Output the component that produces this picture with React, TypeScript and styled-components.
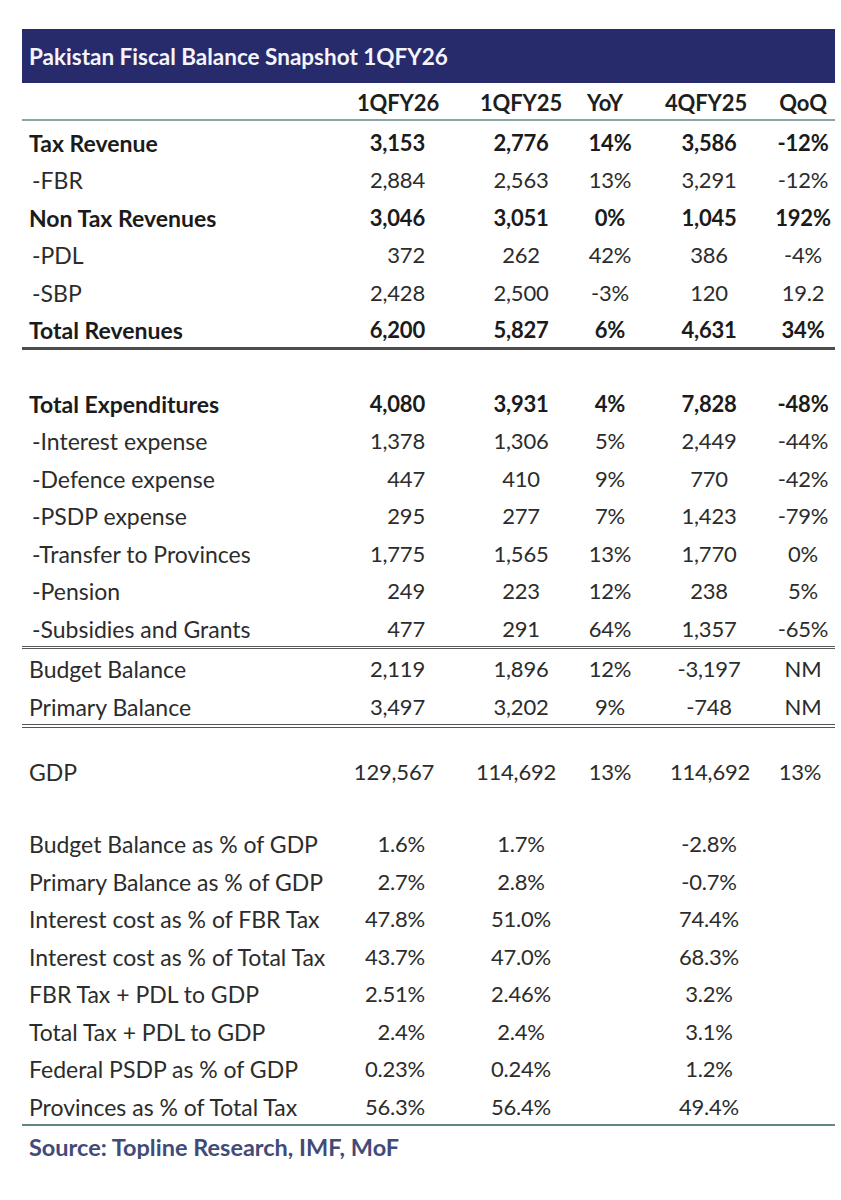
import React from "react";
import styled, { createGlobalStyle } from "styled-components";

const GlobalStyle = createGlobalStyle`
  html, body { margin: 0; padding: 0; background: #ffffff; }
  body { font-family: Lato, "Open Sans", "Liberation Sans", sans-serif; color: #222; }
`;

type Kind = "bold" | "sub" | "plain" | "gdp" | "ratio";
type RowData = { label: string; values: string[]; kind: Kind };

// column layout: label | 1QFY26 | 1QFY25 | YoY | 4QFY25 | QoQ
const TEMPLATE = "328px 112px 118px 60px 140px 55px";

type ColCfg = { justify: string; pad: number; headPad: number; gdpPad: number };
const COLS: ColCfg[] = [
  { justify: "flex-end", pad: 37, headPad: 16, gdpPad: 28 },
  { justify: "center", pad: 0, headPad: 0, gdpPad: 10 },
  { justify: "center", pad: 0, headPad: 10, gdpPad: 0 },
  { justify: "center", pad: 2, headPad: 8, gdpPad: 0 },
  { justify: "center", pad: 9, headPad: 9, gdpPad: 15 },
];

const revenue: RowData[] = [
  { label: "Tax Revenue", values: ["3,153", "2,776", "14%", "3,586", "-12%"], kind: "bold" },
  { label: "-FBR", values: ["2,884", "2,563", "13%", "3,291", "-12%"], kind: "sub" },
  { label: "Non Tax Revenues", values: ["3,046", "3,051", "0%", "1,045", "192%"], kind: "bold" },
  { label: "-PDL", values: ["372", "262", "42%", "386", "-4%"], kind: "sub" },
  { label: "-SBP", values: ["2,428", "2,500", "-3%", "120", "19.2"], kind: "sub" },
  { label: "Total Revenues", values: ["6,200", "5,827", "6%", "4,631", "34%"], kind: "bold" },
];

const expenditure: RowData[] = [
  { label: "Total Expenditures", values: ["4,080", "3,931", "4%", "7,828", "-48%"], kind: "bold" },
  { label: "-Interest expense", values: ["1,378", "1,306", "5%", "2,449", "-44%"], kind: "sub" },
  { label: "-Defence expense", values: ["447", "410", "9%", "770", "-42%"], kind: "sub" },
  { label: "-PSDP expense", values: ["295", "277", "7%", "1,423", "-79%"], kind: "sub" },
  { label: "-Transfer to Provinces", values: ["1,775", "1,565", "13%", "1,770", "0%"], kind: "sub" },
  { label: "-Pension", values: ["249", "223", "12%", "238", "5%"], kind: "sub" },
  { label: "-Subsidies and Grants", values: ["477", "291", "64%", "1,357", "-65%"], kind: "sub" },
];

const balances: RowData[] = [
  { label: "Budget Balance", values: ["2,119", "1,896", "12%", "-3,197", "NM"], kind: "plain" },
  { label: "Primary Balance", values: ["3,497", "3,202", "9%", "-748", "NM"], kind: "plain" },
];

const gdp: RowData = { label: "GDP", values: ["129,567", "114,692", "13%", "114,692", "13%"], kind: "gdp" };

const ratios: RowData[] = [
  { label: "Budget Balance as % of GDP", values: ["1.6%", "1.7%", "", "-2.8%", ""], kind: "ratio" },
  { label: "Primary Balance as % of GDP", values: ["2.7%", "2.8%", "", "-0.7%", ""], kind: "ratio" },
  { label: "Interest cost as % of FBR Tax", values: ["47.8%", "51.0%", "", "74.4%", ""], kind: "ratio" },
  { label: "Interest cost as % of Total Tax", values: ["43.7%", "47.0%", "", "68.3%", ""], kind: "ratio" },
  { label: "FBR Tax + PDL to GDP", values: ["2.51%", "2.46%", "", "3.2%", ""], kind: "ratio" },
  { label: "Total Tax + PDL to GDP", values: ["2.4%", "2.4%", "", "3.1%", ""], kind: "ratio" },
  { label: "Federal PSDP as % of GDP", values: ["0.23%", "0.24%", "", "1.2%", ""], kind: "ratio" },
  { label: "Provinces as % of Total Tax", values: ["56.3%", "56.4%", "", "49.4%", ""], kind: "ratio" },
];

const Sheet = styled.div`
  width: 813px;
  margin: 29px 0 0 22px;
  display: flex;
  flex-direction: column;
  font-size: 22px;
`;

const TitleBar = styled.div`
  height: 54px;
  background: #272b6c;
  color: #f4f4fa;
  display: flex;
  align-items: center;
  padding-left: 7px;
  font-weight: 700;
  font-size: 22.5px;
  letter-spacing: 0;
`;

const HeaderRow = styled.div`
  display: grid;
  grid-template-columns: ${TEMPLATE};
  height: 36px;
  border-bottom: 2px solid #8aa6a4;
  font-weight: 700;
  color: #1e1e1e;
`;

type Rule = "none" | "thick" | "double" | "doubleWide" | "teal";

const Section = styled.div<{ $rule: Rule }>`
  display: flex;
  flex-direction: column;
  border-bottom: ${(p) =>
    p.$rule === "thick"
      ? "3px solid #4d4d4d"
      : p.$rule === "double"
      ? "3px double #5a5a5a"
      : p.$rule === "doubleWide"
      ? "4px double #555"
      : p.$rule === "teal"
      ? "2px solid #5f8985"
      : "none"};
`;

const Spacer = styled.div<{ $h: number }>`
  height: ${(p) => p.$h}px;
`;

const Row = styled.div<{ $bold: boolean }>`
  display: grid;
  grid-template-columns: ${TEMPLATE};
  height: 37.5px;
  font-weight: ${(p) => (p.$bold ? 700 : 400)};
  color: ${(p) => (p.$bold ? "#1b1b1b" : "#2c2c2c")};
`;

const LabelCell = styled.div<{ $indent: boolean }>`
  display: flex;
  align-items: flex-end;
  padding: 0 0 5px ${(p) => (p.$indent ? 10 : 7)}px;
  font-size: 23px;
  line-height: 24px;
  white-space: nowrap;
`;

const ValueCell = styled.div<{ $justify: string; $pad: number }>`
  display: flex;
  align-items: flex-end;
  justify-content: ${(p) => p.$justify};
  padding: 0 ${(p) => p.$pad}px 5px 0;
  line-height: 24px;
  letter-spacing: -0.2px;
  white-space: nowrap;
`;

const HeadCell = styled(ValueCell)`
  padding-bottom: 4px;
  letter-spacing: -0.1px;
`;

const Source = styled.div`
  padding: 9px 0 0 7px;
  font-weight: 700;
  font-size: 23.5px;
  color: #424b78;
  line-height: 24px;
`;

function DataRow({ row }: { row: RowData }) {
  const isGdp = row.kind === "gdp";
  return (
    <Row $bold={row.kind === "bold"}>
      <LabelCell $indent={row.kind === "sub"}>{row.label}</LabelCell>
      {row.values.map((v, i) => (
        <ValueCell
          key={i}
          $justify={COLS[i].justify}
          $pad={isGdp ? COLS[i].gdpPad : COLS[i].pad}
        >
          {v}
        </ValueCell>
      ))}
    </Row>
  );
}

export default function App() {
  const heads = ["1QFY26", "1QFY25", "YoY", "4QFY25", "QoQ"];
  return (
    <>
      <GlobalStyle />
      <Sheet>
        <TitleBar>Pakistan Fiscal Balance Snapshot 1QFY26</TitleBar>
        <HeaderRow>
          <div />
          {heads.map((h, i) => (
            <HeadCell key={h} $justify="center" $pad={COLS[i].headPad}>
              {h}
            </HeadCell>
          ))}
        </HeaderRow>
        <Spacer $h={1} />
        <Section $rule="thick">
          {revenue.map((r) => (
            <DataRow key={r.label} row={r} />
          ))}
        </Section>
        <Spacer $h={33} />
        <Section $rule="double">
          {expenditure.map((r) => (
            <DataRow key={r.label} row={r} />
          ))}
        </Section>
        <Section $rule="doubleWide">
          {balances.map((r) => (
            <DataRow key={r.label} row={r} />
          ))}
        </Section>
        <Spacer $h={24} />
        <DataRow row={gdp} />
        <Spacer $h={34.5} />
        <Section $rule="teal">
          {ratios.map((r) => (
            <DataRow key={r.label} row={r} />
          ))}
        </Section>
        <Source>Source: Topline Research, IMF, MoF</Source>
      </Sheet>
    </>
  );
}
